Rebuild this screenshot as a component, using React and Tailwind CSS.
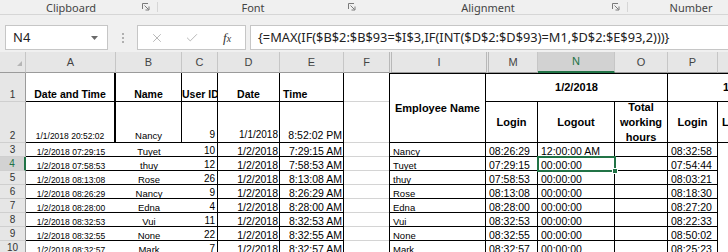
import { X, Check } from "lucide-react";

const left = [
  ["1/2/2018 07:29:15", "Tuyet", "10", "1/2/2018", "7:29:15 AM"],
  ["1/2/2018 07:58:53", "thuy", "12", "1/2/2018", "7:58:53 AM"],
  ["1/2/2018 08:13:08", "Rose", "26", "1/2/2018", "8:13:08 AM"],
  ["1/2/2018 08:26:29", "Nancy", "9", "1/2/2018", "8:26:29 AM"],
  ["1/2/2018 08:28:00", "Edna", "4", "1/2/2018", "8:28:00 AM"],
  ["1/2/2018 08:32:53", "Vui", "11", "1/2/2018", "8:32:53 AM"],
  ["1/2/2018 08:32:55", "None", "22", "1/2/2018", "8:32:55 AM"],
  ["1/2/2018 08:32:57", "Mark", "7", "1/2/2018", "8:32:57 AM"],
];

const right = [
  ["Nancy", "08:26:29", "12:00:00 AM", "08:32:58"],
  ["Tuyet", "07:29:15", "00:00:00", "07:54:44"],
  ["thuy", "07:58:53", "00:00:00", "08:03:21"],
  ["Rose", "08:13:08", "00:00:00", "08:18:30"],
  ["Edna", "08:28:00", "00:00:00", "08:27:20"],
  ["Vui", "08:32:53", "00:00:00", "08:22:33"],
  ["None", "08:32:55", "00:00:00", "08:50:02"],
  ["Mark", "08:32:57", "00:00:00", "08:25:23"],
];

function Launcher() {
  return (
    <svg width="8" height="8" viewBox="0 0 8 8" className="text-[#7a7a7a]">
      <path d="M0.5 6V0.5H6" fill="none" stroke="currentColor" />
      <path d="M2.5 2.5L6.5 6.5M7 3.5V7H3.5" fill="none" stroke="currentColor" />
    </svg>
  );
}

function ColHead({ children, cls = "" }) {
  return (
    <div
      className={
        "flex items-center justify-center border-b border-r border-b-[#9b9b9b] border-r-[#c6c6c6] bg-[#e6e6e6] text-[11px] text-[#444] " +
        cls
      }
    >
      {children}
    </div>
  );
}

function RowHead({ n, active }) {
  return (
    <div
      className={
        active
          ? "flex items-end justify-center border-b border-r-2 border-b-[#cfcfcf] border-r-[#217346] bg-[#d2d2d2] text-[10px] leading-none text-[#217346] pb-[1px]"
          : "flex items-end justify-center border-b border-r border-b-[#cfcfcf] border-r-[#9b9b9b] bg-[#e6e6e6] text-[10px] leading-none text-[#333] pb-[1px]"
      }
    >
      {n}
    </div>
  );
}

export default function App() {
  return (
    <div className="w-[728px] h-[252px] overflow-hidden bg-white font-['Liberation_Sans',Arial,sans-serif] text-black">
      {/* ribbon group labels */}
      <div className="flex h-[15px] border-b border-[#d6d6d6] bg-[#f0f0f0] font-['Noto_Sans',sans-serif] text-[11px] leading-[13px] text-[#444]">
        <div className="flex w-[158px] shrink-0 items-center border-r border-[#d6d6d6] my-[2px]">
          <span className="w-[142px] text-center">Clipboard</span>
          <Launcher />
        </div>
        <div className="flex w-[206px] shrink-0 items-center">
          <span className="w-[190px] text-center">Font</span>
          <Launcher />
        </div>
        <div className="flex w-[264px] shrink-0 items-center border-r border-[#d6d6d6] my-[2px]">
          <span className="w-[248px] text-center">Alignment</span>
          <Launcher />
        </div>
        <div className="flex w-[126px] shrink-0 items-center">
          <span className="w-[126px] text-center">Number</span>
        </div>
      </div>

      {/* formula bar */}
      <div className="flex h-[37px] items-start bg-[#f0f0f0] pt-[10px] pl-[5px] font-['Noto_Sans',sans-serif]">
        <div className="flex h-[25px] w-[103px] items-center justify-between border border-[#c6c6c6] bg-white pl-[7px] pr-[9px] text-[13px] text-[#222]">
          <span>N4</span>
          <svg width="7" height="4" viewBox="0 0 7 4">
            <path d="M0 0H7L3.5 4Z" fill="#6a6a6a" />
          </svg>
        </div>
        <div className="flex w-[29px] flex-col items-center gap-[2px] pt-[8px]">
          <span className="h-[2px] w-[2px] bg-[#b0b0b0]" />
          <span className="h-[2px] w-[2px] bg-[#b0b0b0]" />
          <span className="h-[2px] w-[2px] bg-[#b0b0b0]" />
        </div>
        <div className="flex h-[25px] w-[109px] items-center border border-[#c6c6c6] bg-white pl-[12px]">
          <X size={14} strokeWidth={1.4} className="text-[#a8a8a8]" />
          <Check size={14} strokeWidth={1.4} className="ml-[21px] text-[#a8a8a8]" />
          <span className="ml-[24px] font-['Liberation_Serif',serif] text-[13px] italic text-[#333]">
            f<span className="text-[10px]">x</span>
          </span>
        </div>
        <div className="ml-[4px] flex h-[25px] flex-1 items-center border border-r-0 border-[#c6c6c6] bg-white pl-[7px] text-[12.8px] text-[#222] whitespace-nowrap">
          {"{=MAX(IF($B$2:$B$93=$I$3,IF(INT($D$2:$D$93)=M1,$D$2:$E$93,2)))}"}
        </div>
      </div>

      {/* sheet */}
      <div className="grid grid-cols-[26px_90px_66px_36px_62px_64px_45px_97px_52px_77px_53px_50px_60px] grid-rows-[21px_29px_41px_repeat(8,14px)]">
        {/* column letters */}
        <div className="relative border-b border-r border-b-[#9b9b9b] border-r-[#c6c6c6] bg-[#e6e6e6]">
          <svg width="5" height="5" viewBox="0 0 5 5" className="absolute left-[17px] top-[9px]">
            <path d="M5 0V5H0Z" fill="#b5b5b5" />
          </svg>
        </div>
        <ColHead>A</ColHead>
        <ColHead>B</ColHead>
        <ColHead>C</ColHead>
        <ColHead>D</ColHead>
        <ColHead>E</ColHead>
        <ColHead cls="border-r-0">F</ColHead>
        <ColHead cls="border-l-[3px] border-double border-l-[#b8b8b8] border-r-0">I</ColHead>
        <ColHead cls="border-l-[3px] border-double border-l-[#b8b8b8]">M</ColHead>
        <div className="flex items-center justify-center border-b-2 border-r border-b-[#217346] border-r-[#c6c6c6] bg-[#d2d2d2] text-[11px] text-[#217346]">
          N
        </div>
        <ColHead>O</ColHead>
        <ColHead>P</ColHead>
        <ColHead cls="border-r-0"></ColHead>

        {/* row 1 */}
        <RowHead n="1" />
        <div className="flex items-end justify-center border-b border-r-2 border-black pb-[2px] text-[10.5px] font-bold leading-none">
          Date and Time
        </div>
        <div className="flex items-end justify-center border-b border-r border-black pb-[2px] text-[10.5px] font-bold leading-none">
          Name
        </div>
        <div className="flex items-end overflow-hidden whitespace-nowrap border-b border-r border-black pb-[2px] text-[10.5px] font-bold leading-none">
          User ID
        </div>
        <div className="flex items-end justify-center border-b border-r border-black pb-[2px] text-[10.5px] font-bold leading-none">
          Date
        </div>
        <div className="flex items-end border-b border-r border-black pb-[2px] pl-[3px] text-[10.5px] font-bold leading-none">
          Time
        </div>
        <div className="border-b border-[#d4d4d4]" />
        <div className="row-span-2 flex items-center justify-center border border-black text-[11px] font-bold">
          Employee Name
        </div>
        <div className="col-span-3 flex items-center justify-center border-b border-r border-t border-black text-[11px] font-bold">
          1/2/2018
        </div>
        <div className="col-span-2 flex items-center overflow-hidden whitespace-nowrap border-b border-t border-black pl-[55px] text-[11px] font-bold">
          1/3/2018
        </div>

        {/* row 2 */}
        <RowHead n="2" />
        <div className="flex items-end justify-center border-b border-r-2 border-black pb-[2px] text-[8.5px] leading-none">
          1/1/2018 20:52:02
        </div>
        <div className="flex items-end justify-center border-b border-r border-black pb-[2px] text-[9.5px] leading-none">
          Nancy
        </div>
        <div className="flex items-end justify-end border-b border-r border-black pb-[2px] pr-[2px] text-[10px] leading-none">
          9
        </div>
        <div className="flex items-end justify-end border-b border-r border-black pb-[2px] pr-[1px] text-[10px] leading-none">
          1/1/2018
        </div>
        <div className="flex items-end justify-end border-b border-r border-black pb-[2px] pr-[1px] text-[10.5px] leading-none">
          8:52:02 PM
        </div>
        <div className="border-b border-[#d4d4d4]" />
        <div className="flex items-center justify-center border-b border-r border-black text-[11px] font-bold">Login</div>
        <div className="flex items-center justify-center border-b border-r border-black text-[11px] font-bold">Logout</div>
        <div className="flex flex-col items-center justify-center border-b border-r border-black text-[11px] font-bold leading-[15px] pt-[1px]">
          <span>Total</span>
          <span>working</span>
          <span>hours</span>
        </div>
        <div className="flex items-center justify-center border-b border-r border-black text-[11px] font-bold">Login</div>
        <div className="flex items-center border-b border-black pl-[4px] text-[11px] font-bold">Logout</div>

        {/* data rows */}
        {left.map((r, i) => {
          const n = i + 3;
          const rr = right[i];
          return [
            <RowHead key={"h" + n} n={n} active={n === 4} />,
            <div key={"a" + n} className="flex items-end justify-center border-b border-black text-[8.5px] leading-none">
              {r[0]}
            </div>,
            <div key={"b" + n} className="flex items-end justify-center border-b border-black text-[9.5px] leading-none">
              {r[1]}
            </div>,
            <div key={"c" + n} className="flex items-end justify-end border-b border-r border-black pr-[2px] text-[10px] leading-none">
              {r[2]}
            </div>,
            <div key={"d" + n} className="flex items-end justify-end border-b border-r border-black pr-[1px] text-[10.5px] leading-none">
              {r[3]}
            </div>,
            <div key={"e" + n} className="flex items-end justify-end border-b border-r border-black pr-[1px] text-[10.5px] leading-none">
              {r[4]}
            </div>,
            <div key={"f" + n} className="border-b border-[#d4d4d4]" />,
            <div key={"i" + n} className="flex items-end border-b border-l border-r border-black pl-[3px] text-[9.5px] leading-none">
              {rr[0]}
            </div>,
            <div key={"m" + n} className="flex items-end border-b border-r border-black pl-[3px] text-[10.5px] leading-none">
              {rr[1]}
            </div>,
            <div key={"n" + n} className="relative flex items-end border-b border-r border-black pl-[3px] text-[10.5px] leading-none">
              {rr[2]}
              {n === 4 && (
                <div className="absolute -left-px -top-px z-10 h-[16px] w-[79px] border-2 border-[#217346]">
                  <div className="absolute -bottom-[4px] -right-[4px] h-[6px] w-[6px] border border-white bg-[#217346]" />
                </div>
              )}
            </div>,
            <div key={"o" + n} className="border-b border-r border-black" />,
            <div key={"p" + n} className="flex items-end border-b border-r border-black pl-[3px] text-[10.5px] leading-none">
              {rr[3]}
            </div>,
            <div key={"q" + n} />,
          ];
        })}
      </div>
    </div>
  );
}
